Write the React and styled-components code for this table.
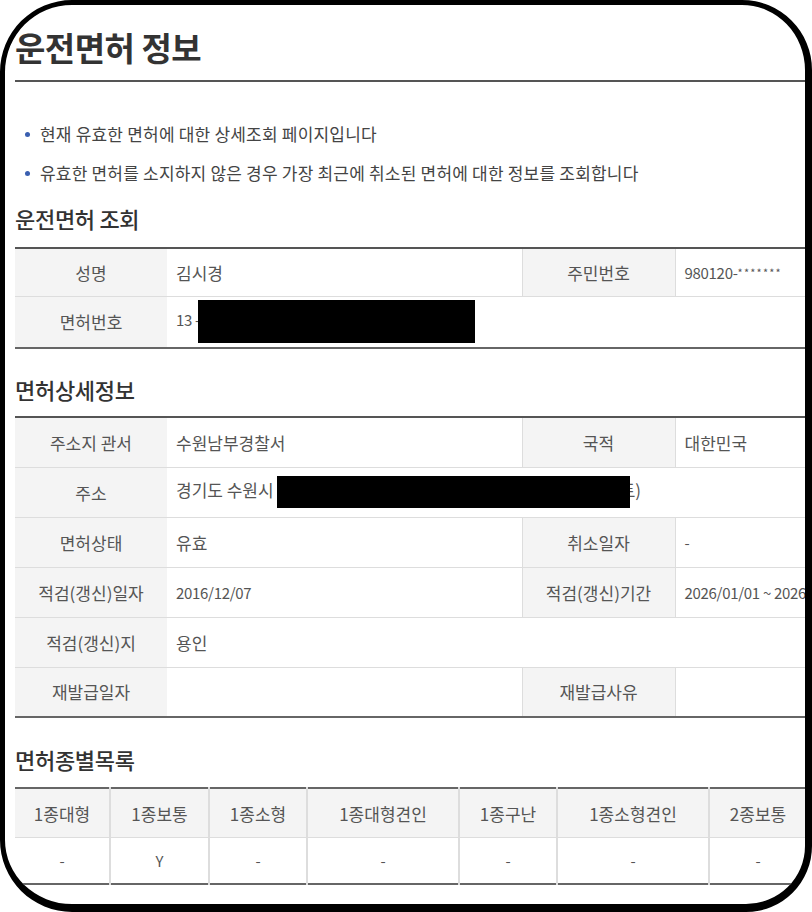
import styled, { createGlobalStyle } from 'styled-components';

const GlobalStyle = createGlobalStyle`
  html, body {
    margin: 0;
    padding: 0;
    background: #fff;
  }
  body {
    font-family: 'Noto Sans CJK KR', 'Noto Sans', sans-serif;
    color: #555;
  }
`;

const info = [
  [
    { label: '성명', value: '김시경' },
    { label: '주민번호', value: '980120-', stars: true, num: true },
  ],
];

const detail = [
  [
    { label: '주소지 관서', value: '수원남부경찰서' },
    { label: '국적', value: '대한민국' },
  ],
  null, // 주소 row, partly blacked out
  [
    { label: '면허상태', value: '유효' },
    { label: '취소일자', value: '-', num: true },
  ],
  [
    { label: '적검(갱신)일자', value: '2016/12/07', num: true },
    { label: '적검(갱신)기간', value: '2026/01/01 ~ 2026/12/31', num: true },
  ],
  [{ label: '적검(갱신)지', value: '용인', wide: true }],
  [
    { label: '재발급일자', value: '' },
    { label: '재발급사유', value: '' },
  ],
];

const kinds = [
  { name: '1종대형', width: 95, value: '-' },
  { name: '1종보통', width: 99, value: 'Y' },
  { name: '1종소형', width: 98, value: '-' },
  { name: '1종대형견인', width: 152, value: '-' },
  { name: '1종구난', width: 98, value: '-' },
  { name: '1종소형견인', width: 152, value: '-' },
  { name: '2종보통', width: 98, value: '-' },
  { name: '2종소형', width: 98, value: '-' },
  { name: '2종원자', width: 98, value: '-' },
];

const InfoCols = () => (
  <colgroup>
    <col width="152" />
    <col width="355" />
    <col width="153" />
    <col width="355" />
  </colgroup>
);

const Cells = ({ cell }) => (
  <>
    <Label>{cell.label}</Label>
    <Value colSpan={cell.wide ? 3 : 1} $num={cell.num}>
      {cell.value}
      {cell.stars && <Stars>*******</Stars>}
    </Value>
  </>
);

const App = () => {
  return (
    <>
      <GlobalStyle />
      <Frame>
        <Page>
          <PageTitle>운전면허 정보</PageTitle>

          <Notice>
            <li>현재 유효한 면허에 대한 상세조회 페이지입니다</li>
            <li>유효한 면허를 소지하지 않은 경우 가장 최근에 취소된 면허에 대한 정보를 조회합니다</li>
          </Notice>

          <SectionTitle $top={21} $bottom={15}>운전면허 조회</SectionTitle>
          <InfoTable>
            <InfoCols />
            <tbody>
              {info.map((row, i) => (
                <InfoRow key={i} $h={48}>
                  {row.map((c) => (
                    <Cells key={c.label} cell={c} />
                  ))}
                </InfoRow>
              ))}
              <InfoRow $h={52}>
                <Label>면허번호</Label>
                <Value colSpan={3} $num>
                  13 -<Redacted $w={277} $h={43} $shift={-2} />
                </Value>
              </InfoRow>
            </tbody>
          </InfoTable>

          <SectionTitle $top={26} $bottom={13}>면허상세정보</SectionTitle>
          <InfoTable>
            <InfoCols />
            <tbody>
              {detail.map((row, i) =>
                row ? (
                  <InfoRow key={i} $h={50}>
                    {row.map((c) => (
                      <Cells key={c.label} cell={c} />
                    ))}
                  </InfoRow>
                ) : (
                  <InfoRow key={i} $h={50}>
                    <Label>주소</Label>
                    <Value colSpan={3}>
                      경기도 수원시
                      <Redacted $w={353} $h={32} $shift={3} />
                      <Tail>트)</Tail>
                    </Value>
                  </InfoRow>
                )
              )}
            </tbody>
          </InfoTable>

          <SectionTitle $top={27} $bottom={14}>면허종별목록</SectionTitle>
          <KindTable>
            <colgroup>
              {kinds.map((k) => (
                <col key={k.name} width={k.width} />
              ))}
            </colgroup>
            <thead>
              <tr>
                {kinds.map((k) => (
                  <KindHead key={k.name}>{k.name}</KindHead>
                ))}
              </tr>
            </thead>
            <tbody>
              <tr>
                {kinds.map((k) => (
                  <KindCell key={k.name}>{k.value}</KindCell>
                ))}
              </tr>
            </tbody>
          </KindTable>
        </Page>
      </Frame>
    </>
  );
};

export default App;

export const Frame = styled.div`
  box-sizing: border-box;
  width: 812px;
  height: 912px;
  border-style: solid;
  border-color: #000;
  border-width: 5px 7px 8px 5px;
  border-radius: 72px 70px 66px 72px;
  overflow: hidden;
  background: #fff;
`;

export const Page = styled.div`
  width: 1030px;
  padding: 22px 0 0 10px;
`;

export const PageTitle = styled.h1`
  margin: 0;
  padding-bottom: 13px;
  border-bottom: 2px solid #555;
  font-size: 33px;
  line-height: 40px;
  font-weight: 700;
  color: #333;
  letter-spacing: -0.5px;
`;

export const Notice = styled.ul`
  list-style: none;
  margin: 42px 0 0;
  padding: 0 0 0 13px;
  li {
    position: relative;
    padding-left: 12px;
    font-size: 17px;
    line-height: 20px;
    color: #444;
    letter-spacing: 0.2px;
    margin-bottom: 19px;
  }
  li:last-child {
    margin-bottom: 0;
  }
  li::before {
    content: '';
    position: absolute;
    left: -3px;
    top: 8px;
    width: 5px;
    height: 5px;
    border-radius: 50%;
    background: #3a5fb0;
  }
`;

export const SectionTitle = styled.h2`
  margin: ${(p) => p.$top}px 0 ${(p) => p.$bottom}px;
  font-size: 22px;
  line-height: 28px;
  font-weight: 500;
  color: #333;
  letter-spacing: -0.3px;
`;

export const InfoTable = styled.table`
  width: 1015px;
  table-layout: fixed;
  border-collapse: collapse;
  border-top: 2px solid #555;
  border-bottom: 2px solid #666;
  font-size: 17px;
`;

export const InfoRow = styled.tr`
  height: ${(p) => p.$h}px;
  border-bottom: 1px solid #ddd;
  td + td + td {
    border-left: 1px solid #ddd;
  }
`;

export const Label = styled.td`
  padding: 0;
  background: #f4f4f4;
  text-align: center;
  color: #555;
  white-space: nowrap;
`;

export const Value = styled.td`
  padding: 0 0 0 9px;
  color: #555;
  white-space: nowrap;
  overflow: hidden;
  font-size: ${(p) => (p.$num ? '15px' : '17px')};
  letter-spacing: ${(p) => (p.$num ? '-0.3px' : '0')};
`;

export const Stars = styled.span`
  font-size: 11px;
  vertical-align: 2px;
  letter-spacing: 1.2px;
`;

export const Redacted = styled.span`
  position: relative;
  z-index: 1;
  display: inline-block;
  width: ${(p) => p.$w}px;
  height: ${(p) => p.$h}px;
  margin-left: ${(p) => p.$shift}px;
  vertical-align: middle;
  background: #000;
`;

export const Tail = styled.span`
  margin-left: -10px;
`;

export const KindTable = styled.table`
  table-layout: fixed;
  border-collapse: collapse;
  width: 988px;
  border-top: 2px solid #666;
  border-bottom: 2px solid #666;
  color: #555;
  text-align: center;
  th + th,
  td + td {
    border-left: 2px solid #ddd;
  }
`;

export const KindHead = styled.th`
  height: 48px;
  padding: 0;
  font-size: 17px;
  font-weight: 400;
  background: #f4f4f4;
  border-bottom: 1px solid #ddd;
  white-space: nowrap;
`;

export const KindCell = styled.td`
  height: 45px;
  padding: 0;
  font-size: 15px;
`;
